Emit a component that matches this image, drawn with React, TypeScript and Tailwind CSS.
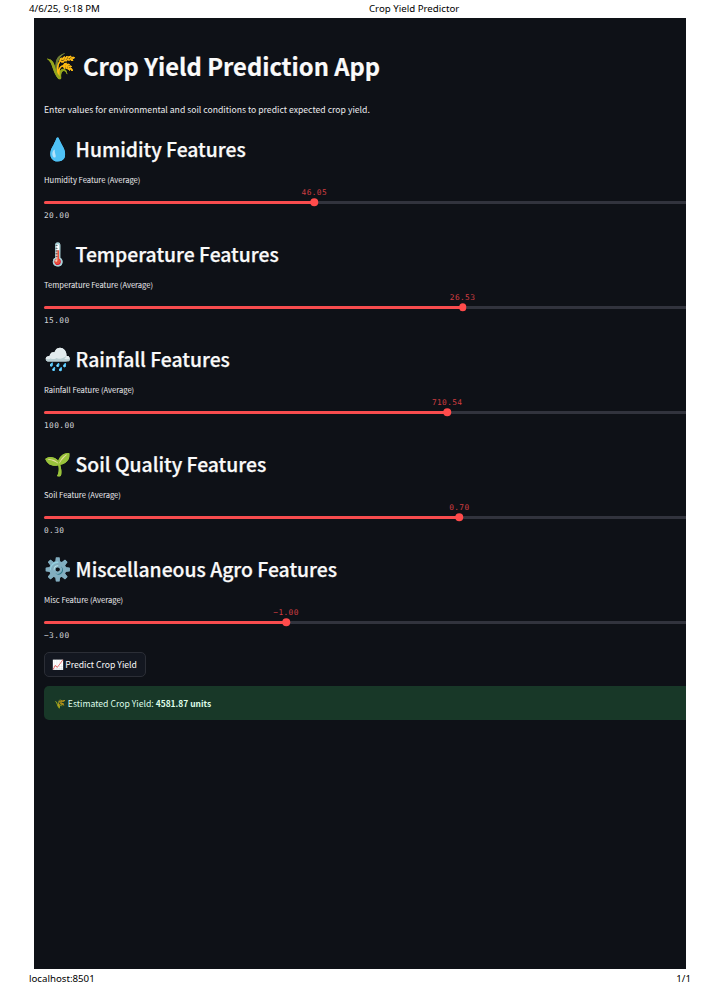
import React from "react";

type Feature = {
  icon: string;
  title: string;
  label: string;
  value: string;
  min: string;
  percent: number;
};

const features: Feature[] = [
  { icon: "💧", title: "Humidity Features", label: "Humidity Feature (Average)", value: "46.05", min: "20.00", percent: 42.1 },
  { icon: "🌡️", title: "Temperature Features", label: "Temperature Feature (Average)", value: "26.53", min: "15.00", percent: 65.2 },
  { icon: "🌧️", title: "Rainfall Features", label: "Rainfall Feature (Average)", value: "710.54", min: "100.00", percent: 62.8 },
  { icon: "🌱", title: "Soil Quality Features", label: "Soil Feature (Average)", value: "0.70", min: "0.30", percent: 64.7 },
  { icon: "⚙️", title: "Miscellaneous Agro Features", label: "Misc Feature (Average)", value: "−1.00", min: "−3.00", percent: 37.7 },
];

function Slider({ value, percent }: { value: string; percent: number }) {
  return (
    <div className="relative mt-[14.5px] h-[3px] rounded-l-full bg-[#31333d]">
      <div className="h-full rounded-l-full bg-[#f84c4e]" style={{ width: `${percent}%` }} />
      <div
        className="absolute top-1/2 size-[7.5px] -translate-x-1/2 -translate-y-1/2 rounded-full bg-[#ff4b4b]"
        style={{ left: `${percent}%` }}
      />
      <span
        className="absolute bottom-[6px] -translate-x-1/2 font-['DejaVu_Sans_Mono',monospace] text-[7.8px] leading-[10px] tracking-[0.4px] text-[#cf3d41]"
        style={{ left: `${percent}%` }}
      >
        {value}
      </span>
    </div>
  );
}

function FeatureSection({ icon, title, label, value, min, percent }: Feature) {
  return (
    <section className="h-[105px]">
      <h2 className="flex h-[30px] items-center text-[19.35px] font-medium whitespace-nowrap [-webkit-text-stroke:0.25px_#fafafa]">
        <span className="-mt-[3px] w-[31.6px] shrink-0 text-[22px]">{icon}</span>
        <span className="mt-px">{title}</span>
      </h2>
      <p className="mt-[10px] h-3 text-[7.6px] leading-3 text-[#ececee]">{label}</p>
      <Slider value={value} percent={percent} />
      <p className="mt-[7.5px] font-['DejaVu_Sans_Mono',monospace] text-[7.8px] leading-[10px] tracking-[0.4px] text-[#d4d5d9]">{min}</p>
    </section>
  );
}

export default function App() {
  return (
    <div className="flex h-[994px] w-[711px] flex-col overflow-hidden bg-white font-['Noto_Sans',sans-serif] text-[9.7px] text-black">
      <header className="grid h-[18px] grid-cols-[340px_1fr] items-center pl-[29px] leading-[18px]">
        <span>4/6/25, 9:18 PM</span>
        <span>Crop Yield Predictor</span>
      </header>

      <main className="mr-[25px] ml-[34px] h-[951px] bg-[#0e1117] pt-[31px] pl-[10px] font-['Noto_Sans_CJK_SC',sans-serif] text-[#fafafa]">
        <h1 className="flex h-[34px] items-center text-[23.75px] font-bold whitespace-nowrap [-webkit-text-stroke:0.2px_#fafafa]">
          <span className="-mt-[3px] box-content w-[38px] shrink-0 pl-px text-[25.5px] font-normal">🌾</span>
          Crop Yield Prediction App
        </h1>
        <p className="mt-[18.5px] mb-[18.5px] h-[14px] text-[8.66px] leading-[14px] text-[#ececee]">
          Enter values for environmental and soil conditions to predict expected crop yield.
        </p>

        {features.map((feature) => (
          <FeatureSection key={feature.title} {...feature} />
        ))}

        <button className="-mt-[7px] flex h-[25px] w-[102px] items-center rounded-[5px] border border-[#2b2e36] bg-[#131720] pb-px pl-[7px] text-[8.66px] whitespace-nowrap">
          <span className="-ml-px w-[14.2px] shrink-0 text-[9.6px]">📈</span>
          Predict Crop Yield
        </button>

        <div className="mt-[9px] flex h-[34px] items-center rounded-l-[5px] bg-[#183828] pt-px pl-[10px] text-[8.66px] text-[#dffde9]">
          <span className="w-[13.8px] shrink-0 text-[9.4px]">🌾</span>
          <span className="whitespace-pre">Estimated Crop Yield: </span>
          <strong className="text-[8.45px] font-bold">4581.87 units</strong>
        </div>
      </main>

      <footer className="flex h-[19px] items-center justify-between pr-[20px] pl-[29px] leading-[19px]">
        <span>localhost:8501</span>
        <span>1/1</span>
      </footer>
    </div>
  );
}
